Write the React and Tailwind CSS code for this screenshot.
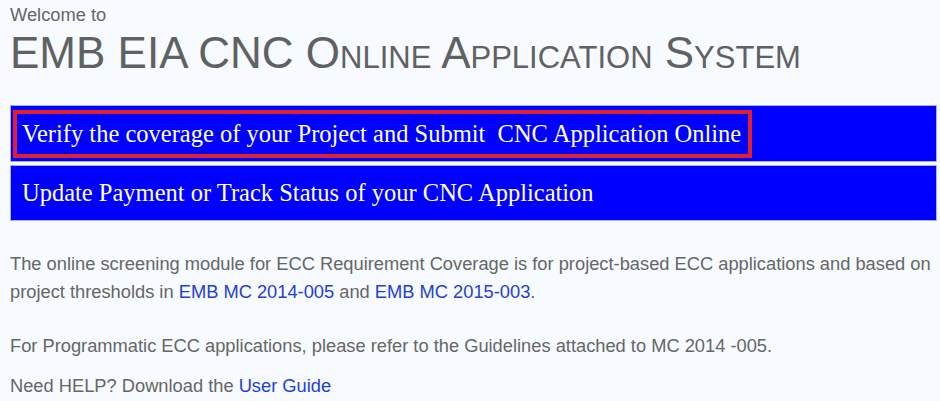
export default function App() {
  return (
    <div className="min-h-[401px] bg-[#f7faff] pl-[10px] pr-[3px] pt-[4px] font-['Liberation_Sans',Arial,sans-serif] text-[18.3px] text-[#666666]">
      <div className="leading-[22px]">Welcome to</div>
      <h1 className="mt-[2px] text-[44px] leading-[50px] text-[#5f6163] [font-variant:small-caps]">
        EMB EIA CNC Online Application System
      </h1>

      <div className="mt-[27px] flex flex-col gap-[3px] font-['Liberation_Serif','Times_New_Roman',serif] text-[24.5px] text-white">
        <div className="h-[57px] border border-[#a9b0f5] bg-[#0000ff] pl-[2px] pt-[4px]">
          <a href="#" className="inline-flex h-[48px] items-center border-4 border-[#e0202e] pl-[5px] pr-[7px]">
            Verify the coverage of your Project and Submit&nbsp; CNC Application Online
          </a>
        </div>
        <div className="flex h-[56px] items-center border border-[#a9b0f5] bg-[#0000ff] pl-[11px]">
          <a href="#">Update Payment or Track Status of your CNC Application</a>
        </div>
      </div>

      <p className="mt-[29px] leading-[28px]">
        The online screening module for ECC Requirement Coverage is for project-based ECC applications and based on project thresholds in{" "}
        <a href="#" className="text-[#1f3fd8]">EMB MC 2014-005</a> and{" "}
        <a href="#" className="text-[#1f3fd8]">EMB MC 2015-003</a>.
      </p>
      <p className="mt-[26px] leading-[28px]">
        For Programmatic ECC applications, please refer to the Guidelines attached to MC 2014 -005.
      </p>
      <p className="mt-[12px] leading-[28px]">
        Need HELP? Download the <a href="#" className="text-[#1f3fd8]">User Guide</a>
      </p>
    </div>
  );
}
